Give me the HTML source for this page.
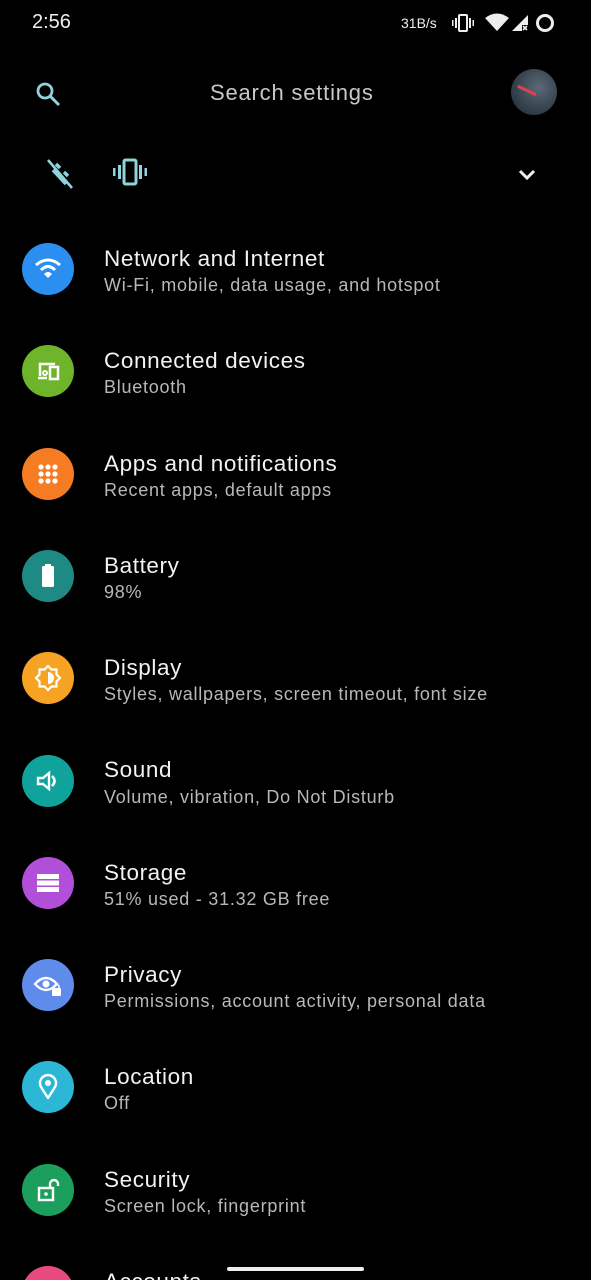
<!DOCTYPE html>
<html style="width:591px;height:1280px;overflow:hidden"><head><meta charset="utf-8"><style>
*{margin:0;padding:0;box-sizing:border-box}
body{width:591px;height:1280px;background:#000;overflow:hidden;position:relative;font-family:"Liberation Sans",sans-serif;color:#fff}
.abs{position:absolute}
.row{position:absolute;left:0;width:591px;height:102px}
.ic{position:absolute;left:22px;width:52px;height:52px;border-radius:50%;display:flex;align-items:center;justify-content:center}
.t{position:absolute;left:104px;font-size:22.5px;color:#f2f2f2;white-space:nowrap;letter-spacing:0.6px}
.s{position:absolute;left:104px;font-size:18px;color:#b8b8b8;white-space:nowrap;letter-spacing:0.75px}
</style></head><body>
<div class="abs" style="left:32px;top:11px;font-size:20px;color:#eee">2:56</div>
<div class="abs" style="left:401px;top:15px;font-size:14px;color:#eee">31B/s</div>
<svg class="abs" style="left:452px;top:13px" width="22" height="20" viewBox="0 0 22 20"><rect x="7" y="2" width="8" height="16" rx="1" fill="none" stroke="#eee" stroke-width="2"/><rect x="3" y="5" width="2" height="10" fill="#eee"/><rect x="17" y="5" width="2" height="10" fill="#eee"/><rect x="0" y="7" width="1.5" height="6" fill="#eee"/><rect x="20.5" y="7" width="1.5" height="6" fill="#eee"/></svg>
<svg class="abs" style="left:485px;top:13px" width="24" height="18" viewBox="0 0 24 18"><path d="M0 5 Q12 -4 24 5 L12 18 Z" fill="#eee"/></svg>
<svg class="abs" style="left:510px;top:13px" width="20" height="20" viewBox="0 0 20 20"><path d="M18 2 L18 12 L12 12 L12 18 L2 18 Z" fill="#eee"/><path d="M13 13 L17 17 M17 13 L13 17" stroke="#eee" stroke-width="1.6"/></svg>
<svg class="abs" style="left:534px;top:12px" width="22" height="22" viewBox="0 0 22 22"><circle cx="11" cy="11" r="7.5" fill="none" stroke="#eee" stroke-width="3"/></svg>

<svg class="abs" style="left:34px;top:80px" width="28" height="28" viewBox="0 0 28 28"><circle cx="11" cy="11" r="7" fill="none" stroke="#8fd3dc" stroke-width="2.8"/><path d="M16 16 L25 25" stroke="#8fd3dc" stroke-width="3"/></svg>
<div class="abs" style="left:210px;top:80px;font-size:22px;color:#c8c8c8;letter-spacing:0.8px">Search settings</div>
<div class="abs" style="left:511px;top:69px;width:46px;height:46px;border-radius:50%;background:radial-gradient(circle at 60% 40%,#5a6a78,#2e3a44 70%)"><div style="position:absolute;left:6px;top:20px;width:20px;height:3px;background:#e04050;transform:rotate(25deg)"></div></div>

<svg class="abs" style="left:44px;top:158px" width="32" height="32" viewBox="0 0 32 32"><path d="M4 2 L28 30" stroke="#8fd3dc" stroke-width="2.6"/><path d="M9 12 L22 26 M12 6 L16 10 M20 14 L24 18" stroke="#8fd3dc" stroke-width="3.5"/></svg>
<svg class="abs" style="left:112px;top:158px" width="36" height="30" viewBox="0 0 36 30"><rect x="12" y="2" width="12" height="24" rx="1.5" fill="none" stroke="#8fd3dc" stroke-width="3"/><rect x="6" y="7" width="3" height="14" fill="#8fd3dc"/><rect x="27" y="7" width="3" height="14" fill="#8fd3dc"/><rect x="1" y="10" width="2.5" height="8" fill="#8fd3dc"/><rect x="32.5" y="10" width="2.5" height="8" fill="#8fd3dc"/></svg>
<svg class="abs" style="left:517px;top:168px" width="20" height="14" viewBox="0 0 20 14"><path d="M3 3 L10 10 L17 3" fill="none" stroke="#eee" stroke-width="3"/></svg>

<div class="row" style="top:218px"><div class="ic" style="top:25px;background:#2a8ff0"><svg width="30" height="30" viewBox="0 0 30 30"><path d="M3 11 Q15 1 27 11" fill="none" stroke="#fff" stroke-width="3"/><path d="M8 16 Q15 9 22 16" fill="none" stroke="#fff" stroke-width="3"/><path d="M11 20 L15 24 L19 20 Q15 16 11 20Z" fill="#fff"/></svg></div><div class="t" style="top:28px">Network and Internet</div><div class="s" style="top:57px">Wi-Fi, mobile, data usage, and hotspot</div></div>

<div class="row" style="top:320px"><div class="ic" style="top:25px;background:#6fb52c"><svg width="30" height="30" viewBox="0 0 30 30"><path d="M7 20 L7 8 L22 8" fill="none" stroke="#fff" stroke-width="2.5"/><path d="M5 22 L14 22" stroke="#fff" stroke-width="2.5"/><circle cx="12" cy="17" r="2" fill="none" stroke="#fff" stroke-width="2"/><rect x="17" y="11" width="8" height="12" fill="none" stroke="#fff" stroke-width="2.5"/></svg></div><div class="t" style="top:28px">Connected devices</div><div class="s" style="top:57px">Bluetooth</div></div>

<div class="row" style="top:423px"><div class="ic" style="top:25px;background:#f57c22"><svg width="26" height="26" viewBox="0 0 26 26" fill="#fff"><circle cx="6" cy="6" r="2.6"/><circle cx="13" cy="6" r="2.6"/><circle cx="20" cy="6" r="2.6"/><circle cx="6" cy="13" r="2.6"/><circle cx="13" cy="13" r="2.6"/><circle cx="20" cy="13" r="2.6"/><circle cx="6" cy="20" r="2.6"/><circle cx="13" cy="20" r="2.6"/><circle cx="20" cy="20" r="2.6"/></svg></div><div class="t" style="top:28px">Apps and notifications</div><div class="s" style="top:57px">Recent apps, default apps</div></div>

<div class="row" style="top:525px"><div class="ic" style="top:25px;background:#1f8a84"><svg width="20" height="30" viewBox="0 0 20 30"><rect x="7" y="3" width="6" height="3" fill="#fff"/><rect x="4" y="5" width="12" height="21" rx="1.5" fill="#fff"/></svg></div><div class="t" style="top:28px">Battery</div><div class="s" style="top:57px">98%</div></div>

<div class="row" style="top:627px"><div class="ic" style="top:25px;background:#f6a324"><svg width="30" height="30" viewBox="0 0 30 30"><path d="M15 3 L18.5 6.5 L23.5 6.5 L23.5 11.5 L27 15 L23.5 18.5 L23.5 23.5 L18.5 23.5 L15 27 L11.5 23.5 L6.5 23.5 L6.5 18.5 L3 15 L6.5 11.5 L6.5 6.5 L11.5 6.5 Z" fill="none" stroke="#fff" stroke-width="2.2"/><path d="M15 9 A6 6 0 0 1 15 21 Z" fill="#fff"/></svg></div><div class="t" style="top:28px">Display</div><div class="s" style="top:57px">Styles, wallpapers, screen timeout, font size</div></div>

<div class="row" style="top:730px"><div class="ic" style="top:25px;background:#0fa39c"><svg width="30" height="30" viewBox="0 0 30 30"><path d="M5 12 L10 12 L16 7 L16 23 L10 18 L5 18 Z" fill="none" stroke="#fff" stroke-width="2.4"/><path d="M19 10 Q24 15 19 20" fill="none" stroke="#fff" stroke-width="2.6"/></svg></div><div class="t" style="top:27px">Sound</div><div class="s" style="top:57px">Volume, vibration, Do Not Disturb</div></div>

<div class="row" style="top:832px"><div class="ic" style="top:25px;background:#b14fd8"><svg width="28" height="28" viewBox="0 0 28 28" fill="#fff"><rect x="3" y="5" width="22" height="5"/><rect x="3" y="11.5" width="22" height="5"/><rect x="3" y="18" width="22" height="5"/></svg></div><div class="t" style="top:28px">Storage</div><div class="s" style="top:57px">51% used - 31.32 GB free</div></div>

<div class="row" style="top:934px"><div class="ic" style="top:25px;background:#5f8bea"><svg width="32" height="30" viewBox="0 0 32 30"><path d="M3 14 Q14 2 25 14 Q14 26 3 14Z" fill="none" stroke="#fff" stroke-width="2.4"/><circle cx="14" cy="14" r="3.5" fill="#fff"/><rect x="20" y="18" width="9" height="8" rx="1" fill="#fff"/><path d="M22 18 L22 16 Q24.5 13 27 16 L27 18" fill="none" stroke="#fff" stroke-width="1.6"/></svg></div><div class="t" style="top:28px">Privacy</div><div class="s" style="top:57px">Permissions, account activity, personal data</div></div>

<div class="row" style="top:1036px"><div class="ic" style="top:25px;background:#2cb7d6"><svg width="26" height="30" viewBox="0 0 26 30"><path d="M13 26 L6 15 A8 8 0 1 1 20 15 Z" fill="none" stroke="#fff" stroke-width="2.4" stroke-linejoin="round"/><circle cx="13" cy="11" r="3" fill="#fff"/></svg></div><div class="t" style="top:28px">Location</div><div class="s" style="top:57px">Off</div></div>

<div class="row" style="top:1139px"><div class="ic" style="top:25px;background:#1c9f5c"><svg width="30" height="30" viewBox="0 0 30 30"><rect x="6" y="13" width="14" height="12" fill="none" stroke="#fff" stroke-width="2.4"/><circle cx="13" cy="19" r="1.8" fill="#fff"/><path d="M17 13 L17 9 A4 4 0 0 1 25 9 L25 11" fill="none" stroke="#fff" stroke-width="2.4"/></svg></div><div class="t" style="top:28px">Security</div><div class="s" style="top:57px">Screen lock, fingerprint</div></div>

<div class="abs" style="left:0;top:1241px;width:591px;height:39px;overflow:hidden"><div class="ic" style="top:25px;background:#e8497f"></div><div class="t" style="top:28px">Accounts</div></div>
<div class="abs" style="left:227px;top:1267px;width:137px;height:4px;border-radius:2px;background:#eee"></div>
</body></html>
